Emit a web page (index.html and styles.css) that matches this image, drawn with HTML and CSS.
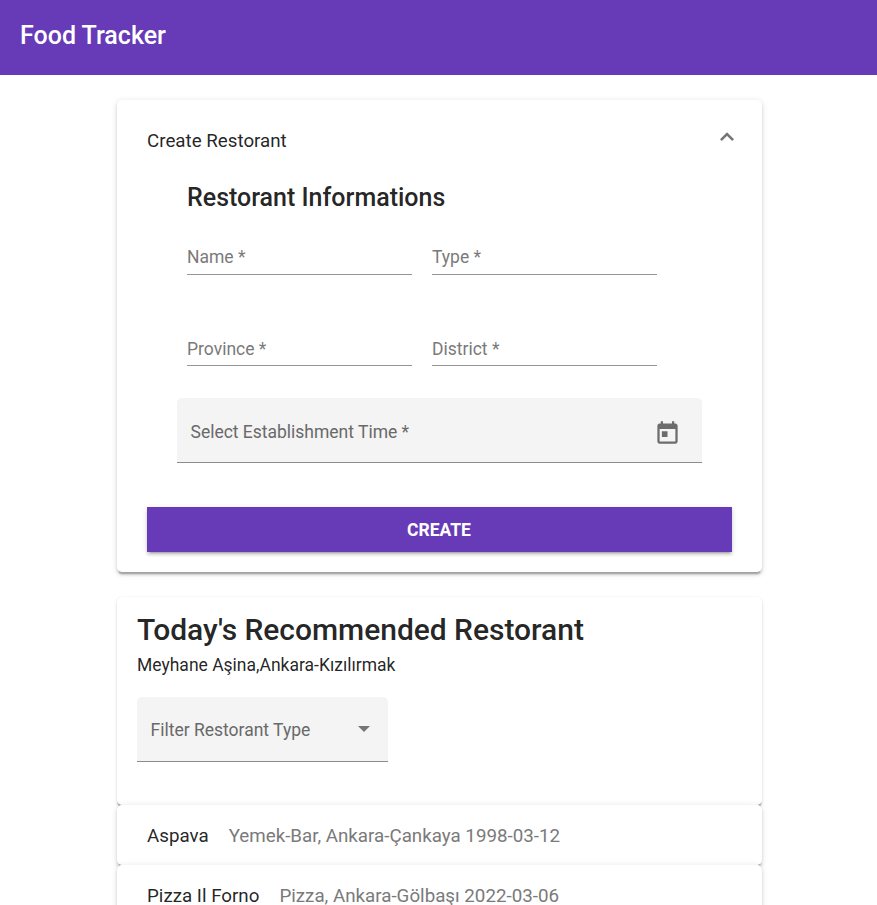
FILE: index.html
```html
<!DOCTYPE html>
<html lang="en">
<head>
<meta charset="utf-8">
<title>Food Tracker</title>
<link rel="stylesheet" href="styles.css">
</head>
<body>
<header class="toolbar"><span class="brand">Food Tracker</span></header>
<main class="content">
  <section class="panel create">
    <div class="panel-header">
      <span class="panel-title">Create Restorant</span>
      <svg class="chevron" viewBox="0 0 16 10" width="16" height="10"><path d="M1.900 8.100 8 2l6.100 6.100" fill="none" stroke="#757575" stroke-width="2.500"/></svg>
    </div>
    <form class="form">
      <h2 class="form-title">Restorant Informations</h2>
      <div class="fields">
        <label class="line-field">Name *</label>
        <label class="line-field">Type *</label>
        <label class="line-field lower">Province *</label>
        <label class="line-field lower">District *</label>
      </div>
      <div class="fill-field date-field">
        <span class="label">Select Establishment Time *</span>
        <svg class="calendar" viewBox="0 0 24 24" width="27" height="27"><path fill="#6c6c6c" d="M19 3h-1V1h-2v2H8V1H6v2H5c-1.110 0-1.990.9-1.990 2L3 19c0 1.100.89 2 2 2h14c1.100 0 2-.9 2-2V5c0-1.100-.9-2-2-2zm0 16H5V8h14v11zM7 10h5v5H7z"/></svg>
      </div>
      <button class="create-button" type="button">CREATE</button>
    </form>
  </section>
  <section class="panel recommended">
    <h1 class="recommended-title">Today's Recommended Restorant</h1>
    <p class="recommended-name">Meyhane Aşina,Ankara-Kızılırmak</p>
    <div class="fill-field select-field">
      <span class="label">Filter Restorant Type</span>
      <span class="arrow"></span>
    </div>
  </section>
  <section class="panel row"><span class="name">Aspava</span><span class="details">Yemek-Bar, Ankara-Çankaya 1998-03-12</span></section>
  <section class="panel row"><span class="name">Pizza Il Forno</span><span class="details">Pizza, Ankara-Gölbaşı 2022-03-06</span></section>
</main>
</body>
</html>
```
FILE: styles.css
```css
* { box-sizing: border-box; }
html, body { height: 100%; }
body {
  margin: 0;
  overflow: hidden;
  background: #fff;
  color: rgba(0, 0, 0, .87);
  font-family: Roboto, "Liberation Sans", sans-serif;
}
h1, h2, p { margin: 0; }
.toolbar {
  height: 75px;
  padding: 21px 20px 0;
  background: #673ab7;
  color: #fff;
}
.brand { display: block; font-size: 25px; font-weight: 500; line-height: 30px; }
.content { width: 645px; margin: 25px 0 0 117px; }
.panel {
  background: #fff;
  border-radius: 5px;
  box-shadow: 0 3.750px 1.250px -2.500px rgba(0, 0, 0, .2), 0 2.500px 2.500px rgba(0, 0, 0, .14), 0 1.250px 6.250px rgba(0, 0, 0, .12);
}
.create { height: 472px; padding: 0 30px; }
.panel-header {
  display: flex;
  justify-content: space-between;
  height: 80px;
  padding-top: 29px;
}
.panel-title { font-size: 18.750px; line-height: 24px; }
.chevron { margin: 2.500px -3px 0 0; }
.form-title {
  height: 36px;
  margin-left: 40px;
  font-size: 25px;
  font-weight: 500;
  line-height: 36px;
}
.fields {
  display: grid;
  grid-template: 59px 59px / 225px 225px;
  gap: 32px 20px;
  margin-left: 40px;
}
.line-field {
  padding-top: 30px;
  border-bottom: 1px solid #949494;
  color: #7a7a7a;
  font-size: 17.500px;
  line-height: 22px;
}
.lower { padding-top: 31px; }
.fill-field {
  display: flex;
  align-items: center;
  justify-content: space-between;
  height: 65px;
  border-bottom: 1px solid #8c8c8c;
  border-radius: 5px 5px 0 0;
  background: #f4f4f4;
  color: #696969;
  font-size: 17.500px;
}
.label { margin-top: 3px; line-height: 22px; }
.date-field { width: 525px; margin: 32px 0 0 30px; padding: 0 21.500px 0 13.500px; }
.date-field .label { letter-spacing: -.01px; }
.calendar { margin-top: 7px; }
.create-button {
  display: block;
  width: 100%;
  height: 45px;
  margin-top: 44px;
  padding: 1px 1px 0 0;
  border: 0;
  background: #673ab7;
  box-shadow: 0 3.750px 1.250px -2.500px rgba(0, 0, 0, .2), 0 2.500px 2.500px rgba(0, 0, 0, .14), 0 1.250px 6.250px rgba(0, 0, 0, .12);
  color: #fff;
  font: 700 17.500px/44px Roboto, sans-serif;
}
.recommended {
  height: 208px;
  margin-top: 25px;
  padding: 13px 20px;
  box-shadow: 0 2.500px 1.250px -1.250px rgba(0, 0, 0, .2), 0 1.250px 1.250px rgba(0, 0, 0, .14), 0 1.250px 3.750px rgba(0, 0, 0, .12);
}
.recommended-title { font-size: 30px; font-weight: 500; line-height: 40px; letter-spacing: -.03px; }
.recommended-name { font-size: 17.500px; line-height: 30px; }
.select-field { width: 251px; margin-top: 17px; padding: 0 18px 0 13.500px; }
.select-field .label { margin-top: 1px; }
.arrow {
  border: 6.250px solid transparent;
  border-top-color: #757575;
  border-bottom: 0;
}
.row {
  display: flex;
  align-items: center;
  gap: 20px;
  height: 60px;
  padding: 2px 30px 0;
  font-size: 18.750px;
}
.details { color: #7a7a7a; }
```
